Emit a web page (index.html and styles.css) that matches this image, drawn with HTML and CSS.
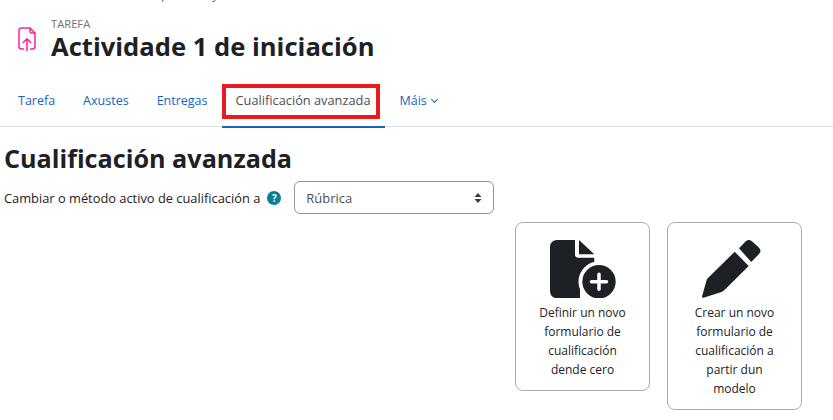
FILE: index.html
```html
<!DOCTYPE html>
<html lang="gl">
<head>
    <meta charset="UTF-8">
    <title>Cualificación avanzada</title>
    <link rel="stylesheet" href="styles.css">
</head>
<body>
    <!-- migas cortadas polo bordo superior -->
    <div class="crumbs">
        <span class="crumb-cut">p</span>
        <span class="crumb-cut">y</span>
    </div>

    <div class="page-header">
        <svg class="activity-icon" width="18" height="24" viewBox="0 0 18 24" fill="none" stroke="#f5239f" stroke-width="1.5" stroke-linecap="round" stroke-linejoin="round">
            <path d="M12 1H3.500C2 1 1 2 1 3.500V19.500C1 21 2 22 3.500 22H5.500"/>
            <path d="M12.500 22H14.500C16 22 17 21 17 19.500V6L12 1V4.500C12 5.500 12.500 6 13.500 6H17"/>
            <path d="M9 23.500V12M5.200 15.500L9 11.700L12.800 15.500"/>
        </svg>
        <div class="page-titles">
            <div class="modtype">TAREFA</div>
            <h1 class="main-title">Actividade 1 de iniciación</h1>
        </div>
    </div>

    <!-- navegación secundaria -->
    <nav class="tabs">
        <a href="#" class="tab">Tarefa</a>
        <a href="#" class="tab">Axustes</a>
        <a href="#" class="tab">Entregas</a>
        <a href="#" class="tab active">
            Cualificación avanzada
            <span class="highlight"></span>
        </a>
        <a href="#" class="tab tab-more">Máis <span class="caret"></span></a>
    </nav>

    <div class="content">
        <h2 class="section-title">Cualificación avanzada</h2>

        <div class="method-row">
            <label class="method-label" for="method">Cambiar o método activo de cualificación a</label>
            <span class="help-icon">?</span>
            <div class="select-box" id="method">
                <span>Rúbrica</span>
                <svg class="select-arrows" width="8" height="12" viewBox="0 0 8 12" fill="#343a40">
                    <path d="M4 1L7.500 5H.5Z"/>
                    <path d="M4 11L.5 7H7.500Z"/>
                </svg>
            </div>
        </div>

        <div class="actions">
            <a href="#" class="action-card">
                <svg class="action-icon" width="66" height="58" viewBox="0 0 66 58">
                    <path fill="#1d2125" d="M7 0H25V14C25 16.500 26 17.700 28.500 17.700H44.300V40H30V58.300H7C3 58.300 0 55.300 0 51.300V7C0 3 3 0 7 0Z"/>
                    <path fill="#1d2125" d="M29 0L44.300 14.300H29Z"/>
                    <circle fill="#fff" cx="49" cy="41.700" r="20.500"/>
                    <circle fill="#1d2125" cx="49" cy="41.700" r="16.700"/>
                    <path fill="none" stroke="#fff" stroke-width="3.500" stroke-linecap="round" d="M49 34.200V49.200M41.500 41.700H56.500"/>
                </svg>
                <span class="action-text">Definir un novo formulario de cualificación dende cero</span>
            </a>
            <a href="#" class="action-card">
                <svg class="action-icon" width="66" height="58" viewBox="0 0 66 58">
                    <path fill="#1d2125" d="M32.700 11.700L46.700 26L24 48.500C22.500 50 21.500 51 19.500 52L1.500 57.700C.5 58 -.2 57.500 0 56.500L4.500 40.500C5 39 5.500 38.500 6.500 37.500Z"/>
                    <path fill="#1d2125" d="M37 8.300L43.500 1.500C45.500 -.5 48 -.5 50 1.300L56.800 7.500C59 9.800 59 12 57 14L49.300 22Z"/>
                </svg>
                <span class="action-text">Crear un novo formulario de cualificación a partir dun modelo</span>
            </a>
        </div>
    </div>
</body>
</html>
```

FILE: styles.css
```css
* {
    margin: 0;
    padding: 0;
    box-sizing: border-box;
}

body {
    font-family: 'Open Sans', 'Noto Sans', Arial, sans-serif;
    font-size: 13px;
    color: #1d2125;
    background-color: white;
    height: 420px;
    overflow: hidden;
}

a {
    text-decoration: none;
}

.crumbs {
    display: flex;
    gap: 43px;
    height: 2px;
    padding-left: 161px;
    overflow: hidden;
}

.crumb-cut {
    display: block;
    margin-top: -14px;
    font-size: 13px;
    line-height: 16px;
    color: #6a737b;
}

/* cabeceira da actividade */
.page-header {
    display: flex;
    padding: 14px 0 0 18px;
    height: 70px;
}

.activity-icon {
    margin-top: 11px;
    margin-right: 15px;
}

.modtype {
    font-size: 11.200px;
    line-height: 15px;
    color: #6a737b;
}

.main-title {
    font-size: 25.600px;
    line-height: 32px;
    font-weight: 700;
    color: #1d2125;
}

/* lapelas */
.tabs {
    display: flex;
    height: 55px;
    padding-left: 4px;
    border-bottom: 1px solid #dee2e6;
}

.tab {
    display: block;
    position: relative;
    height: 55px;
    padding: 20px 14px 0;
    font-size: 12.500px;
    line-height: 17px;
    color: #1565c0;
}

.tab.active {
    color: #495057;
    font-size: 12.800px;
    border-bottom: 2px solid #1565c0;
    height: 56px;
}

.tab-more {
    margin-left: 1px;
}

.highlight {
    position: absolute;
    top: 12px;
    left: 0;
    width: 158px;
    height: 35px;
    border: 4px solid #e8191f;
}

.caret {
    display: inline-block;
    width: 5px;
    height: 5px;
    margin-left: 2px;
    margin-bottom: 3px;
    border-right: 1px solid #1565c0;
    border-bottom: 1px solid #1565c0;
    transform: rotate(45deg);
}

.content {
    padding: 0 4px;
}

.section-title {
    font-size: 25.200px;
    line-height: 32px;
    font-weight: 700;
    margin-top: 15px;
}

.method-row {
    display: flex;
    align-items: center;
    margin-top: 7px;
}

.method-label {
    font-size: 12.850px;
    line-height: 20px;
}

.help-icon {
    width: 14px;
    height: 14px;
    margin-left: 7px;
    border-radius: 50%;
    background-color: #008196;
    color: white;
    font-size: 10px;
    font-weight: 700;
    line-height: 14px;
    text-align: center;
}

.select-box {
    display: flex;
    align-items: center;
    justify-content: space-between;
    width: 200px;
    height: 33px;
    margin-left: 13px;
    padding: 0 11px;
    border: 1px solid #8f959e;
    border-radius: 6px;
    font-size: 13px;
    color: #495057;
}

.actions {
    display: flex;
    align-items: flex-start;
    gap: 17px;
    margin-top: 8px;
    margin-left: 511px;
}

.action-card {
    display: flex;
    flex-direction: column;
    align-items: center;
    width: 135px;
    padding: 17px 22px 11px;
    border: 1px solid #a8abb0;
    border-radius: 8px;
    color: #1d2125;
    text-align: center;
}

.action-icon {
    margin-bottom: 5px;
    flex-shrink: 0;
}

.action-text {
    font-size: 12px;
    line-height: 19px;
}
```
